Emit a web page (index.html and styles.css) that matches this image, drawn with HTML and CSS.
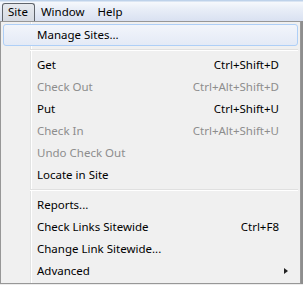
FILE: index.html
```html
<!DOCTYPE html>
<html>
<head>
<meta charset="utf-8">
<link rel="stylesheet" href="styles.css">
</head>
<body>
<div class="menubar">
  <span class="mb-item active">Site</span>
  <span class="mb-item">Window</span>
  <span class="mb-item">Help</span>
</div>
<div class="menu">
  <div class="item hot"><span class="label">Manage Sites...</span></div>
  <div class="sep"></div>
  <div class="item"><span class="label">Get</span><span class="key">Ctrl+Shift+D</span></div>
  <div class="item disabled"><span class="label">Check Out</span><span class="key">Ctrl+Alt+Shift+D</span></div>
  <div class="item"><span class="label">Put</span><span class="key">Ctrl+Shift+U</span></div>
  <div class="item disabled"><span class="label">Check In</span><span class="key">Ctrl+Alt+Shift+U</span></div>
  <div class="item disabled"><span class="label">Undo Check Out</span></div>
  <div class="item"><span class="label">Locate in Site</span></div>
  <div class="sep"></div>
  <div class="item"><span class="label">Reports...</span></div>
  <div class="item"><span class="label">Check Links Sitewide</span><span class="key">Ctrl+F8</span></div>
  <div class="item"><span class="label">Change Link Sitewide...</span></div>
  <div class="item sub"><span class="label">Advanced</span><span class="arrow"></span></div>
</div>
</body>
</html>
```
FILE: styles.css
```css
html, body {
  margin: 0;
  padding: 0;
}
body {
  width: 303px;
  height: 285px;
  overflow: hidden;
  background: #ececec;
  font-family: "Noto Sans", "Open Sans", sans-serif;
  font-size: 11.5px;
  color: #000;
}
.menubar {
  height: 21px;
  display: flex;
  align-items: stretch;
  padding: 3px 0 0 2px;
  box-sizing: border-box;
  background: linear-gradient(#bed2ea 0, #bed2ea 1px, #f6f8fc 2px, #eaeff8 8px, #d9e1f1 21px);
}
.mb-item {
  display: flex;
  align-items: center;
  padding: 0 6px 1px 5px;
  border: 1px solid transparent;
  border-radius: 3px 3px 0 0;
  line-height: 1;
}
.mb-item.active {
  border-color: #5f646b;
  border-bottom: none;
  background: linear-gradient(#e6e9ee, #d6dbe3);
}
.menu {
  width: 301px;
  box-sizing: border-box;
  border: 1px solid #979797;
  padding: 2px 2px 1px 2px;
  background-color: #f0f0f0;
  background-image: linear-gradient(to right, transparent 29px, #e2e3e3 29px, #e2e3e3 30px, #ffffff 30px, #ffffff 31px, transparent 31px);
  box-shadow: 2px 0 0 #8e8e8e;
}
.item {
  height: 22px;
  box-sizing: border-box;
  display: flex;
  align-items: center;
  padding: 0 18px 1px 33px;
  border: 1px solid transparent;
  border-radius: 3px;
  white-space: nowrap;
}
.item .label {
  flex: 1;
}
.item.hot {
  border-color: #aecff7;
  background: linear-gradient(#f2f5fb, #e4eaf6);
}
.item.disabled {
  color: #8d8d8d;
}
.sep {
  height: 8px;
  margin-left: 27px;
  background: linear-gradient(transparent 3px, #e0e0e0 3px, #e0e0e0 4px, #ffffff 4px, #ffffff 5px, transparent 5px);
}
.arrow {
  width: 0;
  height: 0;
  border-top: 3.5px solid transparent;
  border-bottom: 3.5px solid transparent;
  border-left: 4px solid #222;
  margin-right: -9px;
}
```
